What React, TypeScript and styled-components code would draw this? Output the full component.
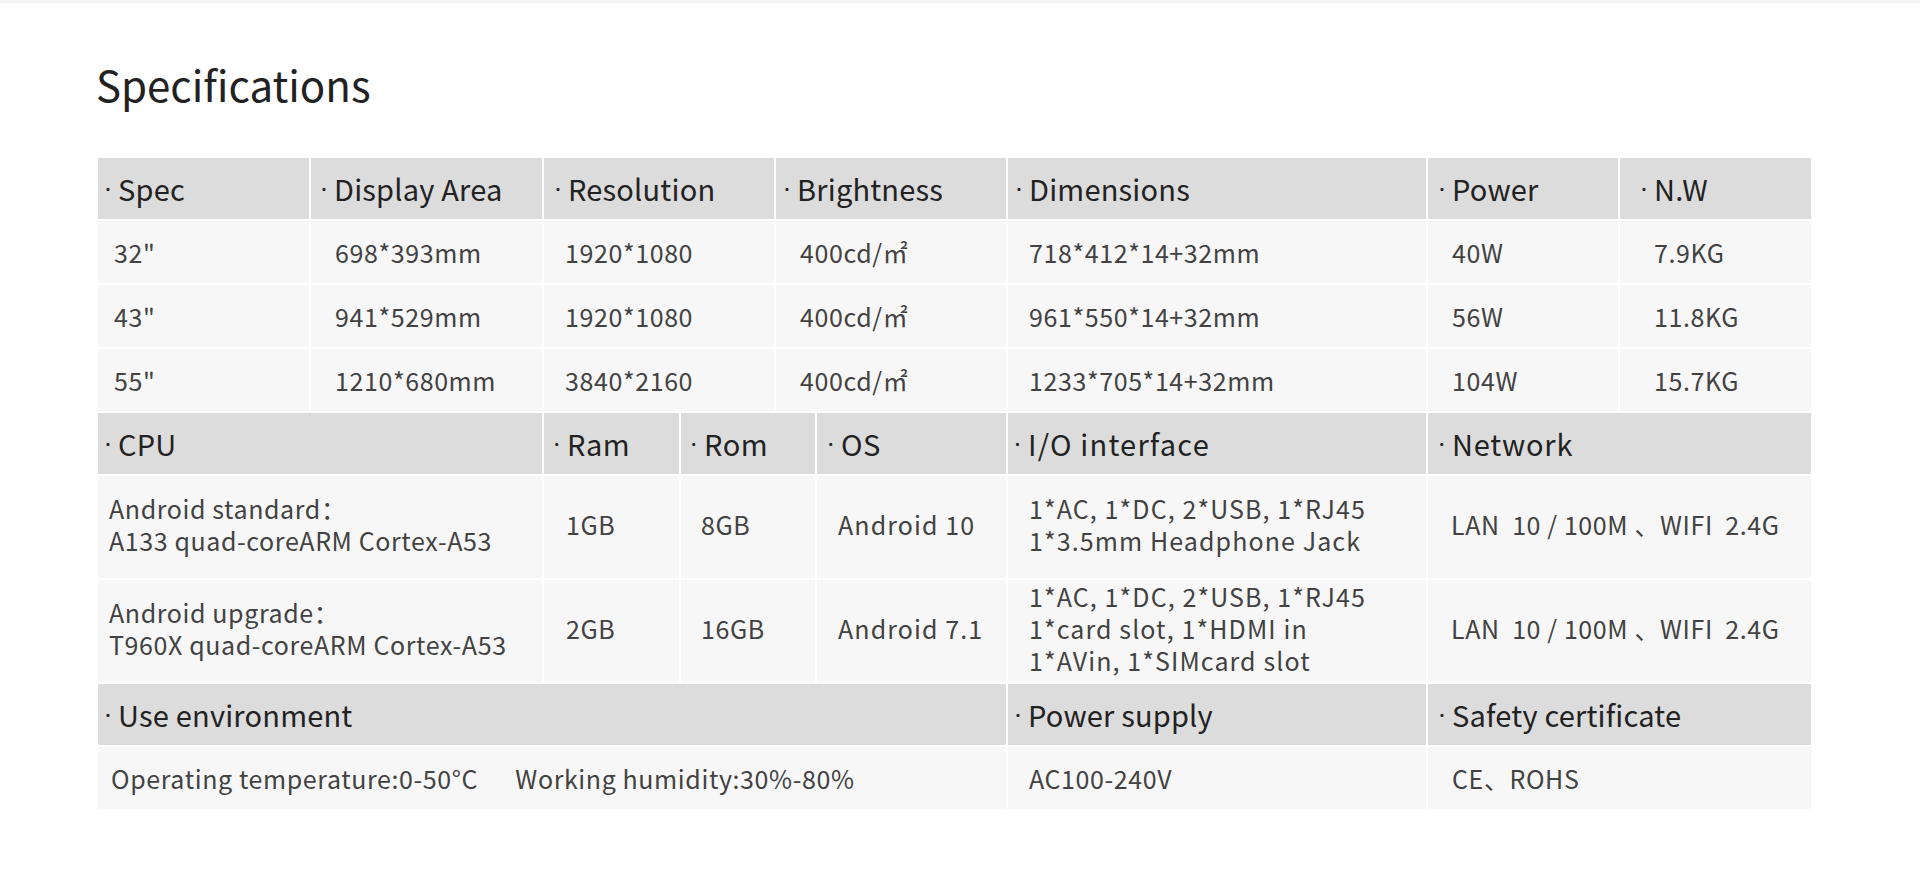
import { Fragment } from 'react';
import styled, { createGlobalStyle } from 'styled-components';

const GlobalStyle = createGlobalStyle`
	html, body {
		margin: 0;
		padding: 0;
		background: #ffffff;
	}
	body {
		font-family: 'Noto Sans CJK SC', 'Noto Sans', sans-serif;
		color: #333333;
	}
`;

const Page = styled.div`
	box-sizing: border-box;
	width: 1920px;
	min-height: 871px;
	padding: 60px 109px 0 98px;
	border-top: 3px solid #f4f4f4;
`;

const Title = styled.h1`
	margin: 0 0 53px -2px;
	font-size: 42px;
	line-height: 42px;
	font-weight: 400;
	color: #222222;
`;

const Table = styled.div`
	display: grid;
	grid-template-columns: 211px 231px 135px 93px 39px 189px 418px 190px 191px;
	grid-template-rows: 61px 62px 62px 62px 61px 102px 102px 61px 62px;
	gap: 2px;
	width: 1713px;
`;

const Cell = styled.div<{ $span?: number; $indent?: number; $spacing?: number }>`
	grid-column: span ${(p) => p.$span ?? 1};
	display: flex;
	align-items: center;
	box-sizing: border-box;
	padding-left: ${(p) => p.$indent ?? 21}px;
	white-space: pre;
`;

const HeadCell = styled(Cell)`
	background: #dcdcdc;
	color: #222222;
	font-size: 29px;
	line-height: 1;
	letter-spacing: ${(p) => p.$spacing ?? 0.2}px;
`;

const Bullet = styled.span`
	display: inline-block;
	width: 8px;
	margin-right: 6px;
	text-align: center;
	font-family: 'Noto Sans', 'DejaVu Sans', sans-serif;
	font-size: 24px;
`;

const BodyCell = styled(Cell)<{ $tall?: boolean }>`
	background: #f7f7f7;
	color: #424242;
	font-size: 25px;
	line-height: 32px;
	letter-spacing: ${(p) => p.$spacing ?? 0.6}px;
	padding-bottom: ${(p) => (p.$tall ? 6 : 0)}px;
`;

const Lines = styled.div`
	display: flex;
	flex-direction: column;
`;

type Col = { text: string | string[]; span?: number; indent?: number; spacing?: number };

const sections: { head: Col[]; rows: Col[][]; tall?: boolean }[] = [
	{
		head: [
			{ text: 'Spec', indent: 6 },
			{ text: 'Display Area', indent: 9 },
			{ text: 'Resolution', span: 2, indent: 10 },
			{ text: 'Brightness', span: 2, indent: 7 },
			{ text: 'Dimensions', indent: 7 },
			{ text: 'Power', indent: 10 },
			{ text: 'N.W', indent: 20 },
		],
		rows: [
			['32"', '698*393mm', '1920*1080', '400cd/㎡', '718*412*14+32mm', '40W', '7.9KG'],
			['43"', '941*529mm', '1920*1080', '400cd/㎡', '961*550*14+32mm', '56W', '11.8KG'],
			['55"', '1210*680mm', '3840*2160', '400cd/㎡', '1233*705*14+32mm', '104W', '15.7KG'],
		].map((r) =>
			r.map((text, i) => ({
				text,
				span: i === 2 || i === 3 ? 2 : 1,
				indent: [16, 24, 21, 24, 21, 24, 34][i],
			})),
		),
	},
	{
		tall: true,
		head: [
			{ text: 'CPU', span: 2, indent: 6 },
			{ text: 'Ram', indent: 9, spacing: 0.6 },
			{ text: 'Rom', span: 2, indent: 9, spacing: 0.6 },
			{ text: 'OS', indent: 10, spacing: 0.6 },
			{ text: 'I/O interface', indent: 6, spacing: 1.2 },
			{ text: 'Network', span: 2, indent: 10, spacing: 0.8 },
		],
		rows: [
			[
				{ text: ['Android standard：', 'A133 quad-coreARM Cortex-A53'], span: 2, indent: 11 },
				{ text: '1GB', indent: 22 },
				{ text: '8GB', span: 2, indent: 20 },
				{ text: 'Android 10', spacing: 1.1 },
				{ text: ['1*AC, 1*DC, 2*USB, 1*RJ45', '1*3.5mm Headphone Jack'], spacing: 1.1 },
				{ text: 'LAN  10 / 100M 、WIFI  2.4G', span: 2, indent: 23 },
			],
			[
				{ text: ['Android upgrade：', 'T960X quad-coreARM Cortex-A53'], span: 2, indent: 11 },
				{ text: '2GB', indent: 22 },
				{ text: '16GB', span: 2, indent: 20 },
				{ text: 'Android 7.1', spacing: 1.1 },
				{
					text: ['1*AC, 1*DC, 2*USB, 1*RJ45', '1*card slot, 1*HDMI in', '1*AVin, 1*SIMcard slot'],
					spacing: 1.1,
				},
				{ text: 'LAN  10 / 100M 、WIFI  2.4G', span: 2, indent: 23 },
			],
		],
	},
	{
		head: [
			{ text: 'Use environment', span: 6, indent: 6 },
			{ text: 'Power supply', indent: 6 },
			{ text: 'Safety certificate', span: 2, indent: 10 },
		],
		rows: [
			[
				{ text: 'Operating temperature:0-50°C      Working humidity:30%-80%', span: 6, indent: 13 },
				{ text: 'AC100-240V' },
				{ text: 'CE、ROHS', span: 2, indent: 24 },
			],
		],
	},
];

export default function App() {
	return (
		<>
			<GlobalStyle />
			<Page>
				<Title>Specifications</Title>
				<Table>
					{sections.map((section, si) => (
						<Fragment key={si}>
							{section.head.map((h, hi) => (
								<HeadCell
									key={`h${hi}`}
									$span={h.span}
									$indent={h.indent}
									$spacing={h.spacing}
								>
									<Bullet>·</Bullet>
									{h.text}
								</HeadCell>
							))}
							{section.rows.map((row, ri) =>
								row.map((c, ci) => (
									<BodyCell
										key={`b${ri}-${ci}`}
										$span={c.span}
										$indent={c.indent}
										$spacing={c.spacing}
										$tall={section.tall}
									>
										{Array.isArray(c.text) ? (
											<Lines>
												{c.text.map((line) => (
													<span key={line}>{line}</span>
												))}
											</Lines>
										) : (
											c.text
										)}
									</BodyCell>
								)),
							)}
						</Fragment>
					))}
				</Table>
			</Page>
		</>
	);
}
